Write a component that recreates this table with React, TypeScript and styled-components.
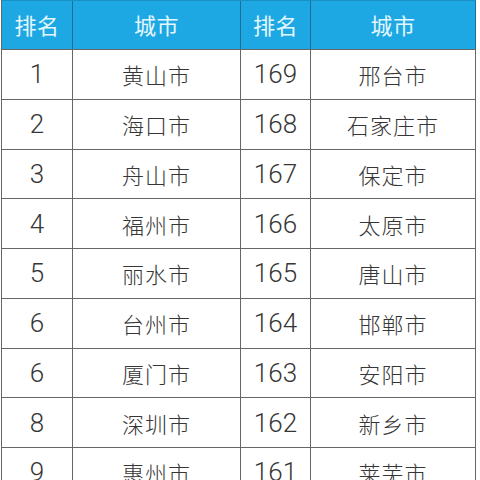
import styled, { createGlobalStyle } from "styled-components";
import { FC } from "react";

const GlobalStyle = createGlobalStyle`
  html, body {
    margin: 0;
    padding: 0;
    background: #ffffff;
  }
  body {
    font-family: "Noto Sans CJK SC", "Noto Sans", sans-serif;
  }
`;

const COLUMNS = "71px 168px 70px 165px";
const LINE = "#666666";

interface IRow {
  rankA: string;
  cityA: string;
  rankB: string;
  cityB: string;
}

const ROWS: IRow[] = [
  { rankA: "1", cityA: "黄山市", rankB: "169", cityB: "邢台市" },
  { rankA: "2", cityA: "海口市", rankB: "168", cityB: "石家庄市" },
  { rankA: "3", cityA: "舟山市", rankB: "167", cityB: "保定市" },
  { rankA: "4", cityA: "福州市", rankB: "166", cityB: "太原市" },
  { rankA: "5", cityA: "丽水市", rankB: "165", cityB: "唐山市" },
  { rankA: "6", cityA: "台州市", rankB: "164", cityB: "邯郸市" },
  { rankA: "6", cityA: "厦门市", rankB: "163", cityB: "安阳市" },
  { rankA: "8", cityA: "深圳市", rankB: "162", cityB: "新乡市" },
  { rankA: "9", cityA: "惠州市", rankB: "161", cityB: "莱芜市" },
];

const App: FC = () => {
  return (
    <>
      <GlobalStyle />
      <Page>
        <Table>
          <HeaderRow>
            <HeadCell>排名</HeadCell>
            <HeadCell>城市</HeadCell>
            <HeadCell>排名</HeadCell>
            <HeadCell>城市</HeadCell>
          </HeaderRow>
          {ROWS.map((row, idx) => (
            <Row key={idx}>
              <Cell numeric>{row.rankA}</Cell>
              <Cell>{row.cityA}</Cell>
              <Cell numeric>{row.rankB}</Cell>
              <Cell>{row.cityB}</Cell>
            </Row>
          ))}
        </Table>
      </Page>
    </>
  );
};

export default App;

const Page = styled.div`
  width: 480px;
  height: 480px;
  overflow: hidden;
  padding-left: 1px;
  box-sizing: border-box;
`;

const Table = styled.div`
  width: 475px;
  display: flex;
  flex-direction: column;
  border-left: 1px solid ${LINE};
  box-sizing: border-box;
`;

const HeaderRow = styled.div`
  display: grid;
  grid-template-columns: ${COLUMNS};
  height: 50px;
  background: #1da8e4;
  border-top: 1px solid #1a8fc4;
  border-bottom: 1px solid ${LINE};
  box-sizing: border-box;
`;

const HeadCell = styled.div`
  display: flex;
  align-items: center;
  justify-content: center;
  color: #e4f7fd;
  font-size: 22px;
  letter-spacing: 0.5px;
  border-right: 1px solid #1f6e96;
  padding-bottom: 2px;
`;

const Row = styled.div`
  display: grid;
  grid-template-columns: ${COLUMNS};
  height: 49.75px;
  flex-shrink: 0;
  border-bottom: 1px solid ${LINE};
  box-sizing: border-box;
`;

interface CellProps {
  numeric?: boolean;
}
const Cell = styled.div<CellProps>`
  display: flex;
  align-items: center;
  justify-content: center;
  color: #363636;
  border-right: 1px solid ${LINE};
  font-family: ${({ numeric }) =>
    numeric
      ? `Roboto, "Liberation Sans", sans-serif`
      : `"Noto Sans CJK SC", sans-serif`};
  font-size: ${({ numeric }) => (numeric ? "26px" : "22px")};
  font-weight: 300;
  letter-spacing: ${({ numeric }) => (numeric ? "0" : "1px")};
`;
